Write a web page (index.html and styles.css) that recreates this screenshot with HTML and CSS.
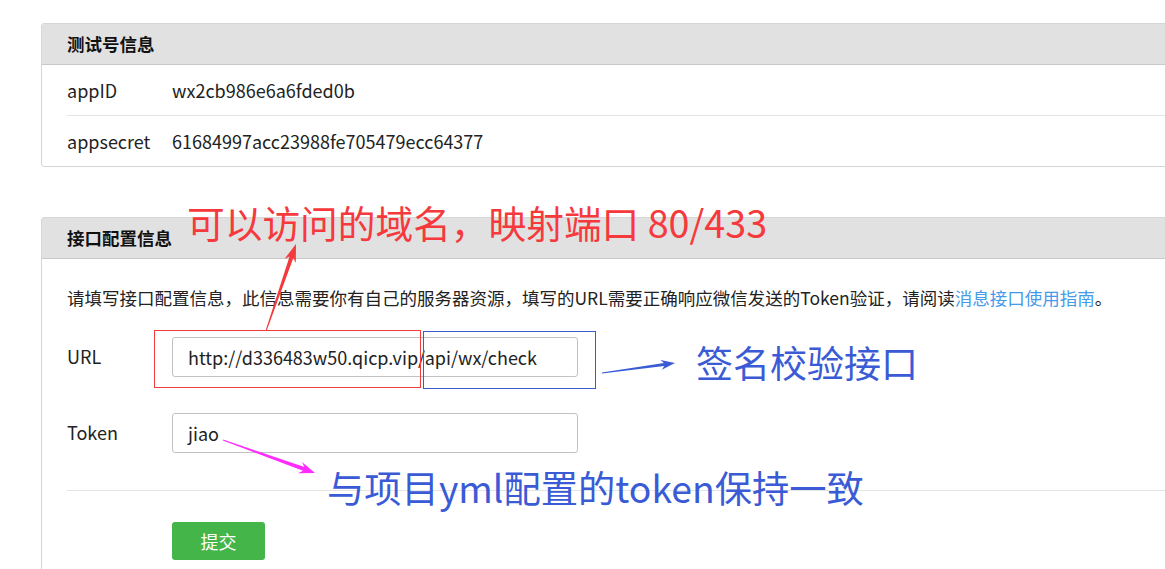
FILE: index.html
```html
<!DOCTYPE html>
<html lang="zh-CN">
<head>
<meta charset="utf-8">
<title>接口配置</title>
<link rel="stylesheet" href="styles.css">
</head>
<body>
<div class="page">
  <section class="panel">
    <div class="panel-hd">测试号信息</div>
    <div class="panel-bd">
      <div class="info-row"><span class="label">appID</span><span class="value">wx2cb986e6a6fded0b</span></div>
      <div class="info-row"><span class="label">appsecret</span><span class="value">61684997acc23988fe705479ecc64377</span></div>
    </div>
  </section>

  <section class="panel panel-config">
    <div class="panel-hd">接口配置信息</div>
    <div class="panel-bd config-bd">
      <p class="desc">请填写接口配置信息，此信息需要你有自己的服务器资源，填写的URL需要正确响应微信发送的Token验证，请阅读<a class="link">消息接口使用指南</a>。</p>
      <div class="form">
        <div class="form-row"><span class="label">URL</span><div class="input">http://d336483w50.qicp.vip/api/wx/check</div></div>
        <div class="form-row"><span class="label">Token</span><div class="input">jiao</div></div>
      </div>
      <div class="form-ft"><button class="btn">提交</button></div>
    </div>
  </section>
</div>

<div class="annot">
  <svg class="annot-svg" width="1165" height="569" viewBox="0 0 1165 569">
    <rect x="154.5" y="330.5" width="266" height="57" fill="none" stroke="#f03c3c" stroke-width="1"/>
    <rect x="423.5" y="331.5" width="172" height="57" fill="none" stroke="#3c5ac8" stroke-width="1"/>
    <polygon fill="#f53a3d" points="266.47,331.16 293.33,257.88 295.80,262.97 296,244 284.46,259.05 289.55,256.58 265.53,330.84"/>
    <polygon fill="#3a5cd4" points="602.07,373.50 664.30,365.99 661.81,369.86 675,363 660.45,359.94 663.90,363.01 601.93,372.50"/>
    <polygon fill="#ff2bff" points="222.83,440.47 303.03,470.82 297.91,473.24 315,473 301.97,461.94 304.39,467.06 223.17,439.53"/>
  </svg>
  <div class="note note-red">可以访问的域名，映射端口 80/433</div>
  <div class="note note-blue note-sign">签名校验接口</div>
  <div class="note note-blue note-token">与项目yml配置的token保持一致</div>
</div>
</body>
</html>
```

FILE: styles.css
```css
* { box-sizing: border-box; }
html, body { margin: 0; padding: 0; }
body {
  width: 1165px;
  height: 569px;
  overflow: hidden;
  position: relative;
  background: #fff;
  font-family: "Noto Sans CJK SC", "Noto Sans", sans-serif;
  font-size: 18px;
  color: #222;
}
.page {
  padding: 23px 0 0 41px;
}
.panel {
  width: 1200px;
  border: 1px solid #d6d6d6;
  border-radius: 3px;
  background: #fff;
}
.panel-config {
  margin-top: 50px;
  height: 400px;
}
.panel-hd {
  height: 41px;
  line-height: 40px;
  padding-left: 25px;
  background: #e1e1e1;
  border-bottom: 1px solid #c9c9c9;
  font-weight: bold;
  font-size: 17.5px;
  color: #111;
}
.info-row {
  display: flex;
  align-items: center;
  height: 50px;
  margin-left: 25px;
}
.info-row + .info-row {
  height: 51px;
  border-top: 1px solid #e4e4e4;
}
.label {
  width: 105px;
  flex: none;
  line-height: 24px;
}
.value { line-height: 24px; }
.config-bd { padding-top: 26px; }
.desc {
  margin: 0 0 0 25px;
  line-height: 26px;
  font-size: 17.5px;
}
.link { color: #459ae9; text-decoration: none; }
.form {
  margin: 26px 0 0 25px;
  display: flex;
  flex-direction: column;
  gap: 36px;
}
.form-row {
  display: flex;
  align-items: center;
}
.form-row .label { margin-top: -3px; }
.input {
  width: 406px;
  height: 40px;
  line-height: 38px;
  padding-left: 15px;
  border: 1px solid #c2c2c2;
  border-radius: 3px;
  background: #fff;
  white-space: nowrap;
  overflow: hidden;
}
.form-ft {
  margin: 37px 0 0 25px;
  padding: 31px 0 0 105px;
  border-top: 1px solid #e4e4e4;
}
.btn {
  width: 93px;
  height: 38px;
  border: 0;
  border-radius: 3px;
  background: #44b549;
  color: #fff;
  font-family: inherit;
  font-size: 18px;
  padding: 0;
}
.annot {
  position: absolute;
  left: 0;
  top: 0;
  width: 1165px;
  height: 569px;
  pointer-events: none;
}
.annot-svg { position: absolute; left: 0; top: 0; }
.note {
  position: absolute;
  line-height: 40px;
  white-space: nowrap;
}
.note-red {
  left: 187px;
  top: 202px;
  font-size: 37.7px;
  color: #f5393c;
}
.note-blue { color: #3a5bd5; }
.note-sign {
  left: 696px;
  top: 342px;
  font-size: 37px;
}
.note-token {
  left: 327px;
  top: 467px;
  font-size: 37.3px;
}
```
